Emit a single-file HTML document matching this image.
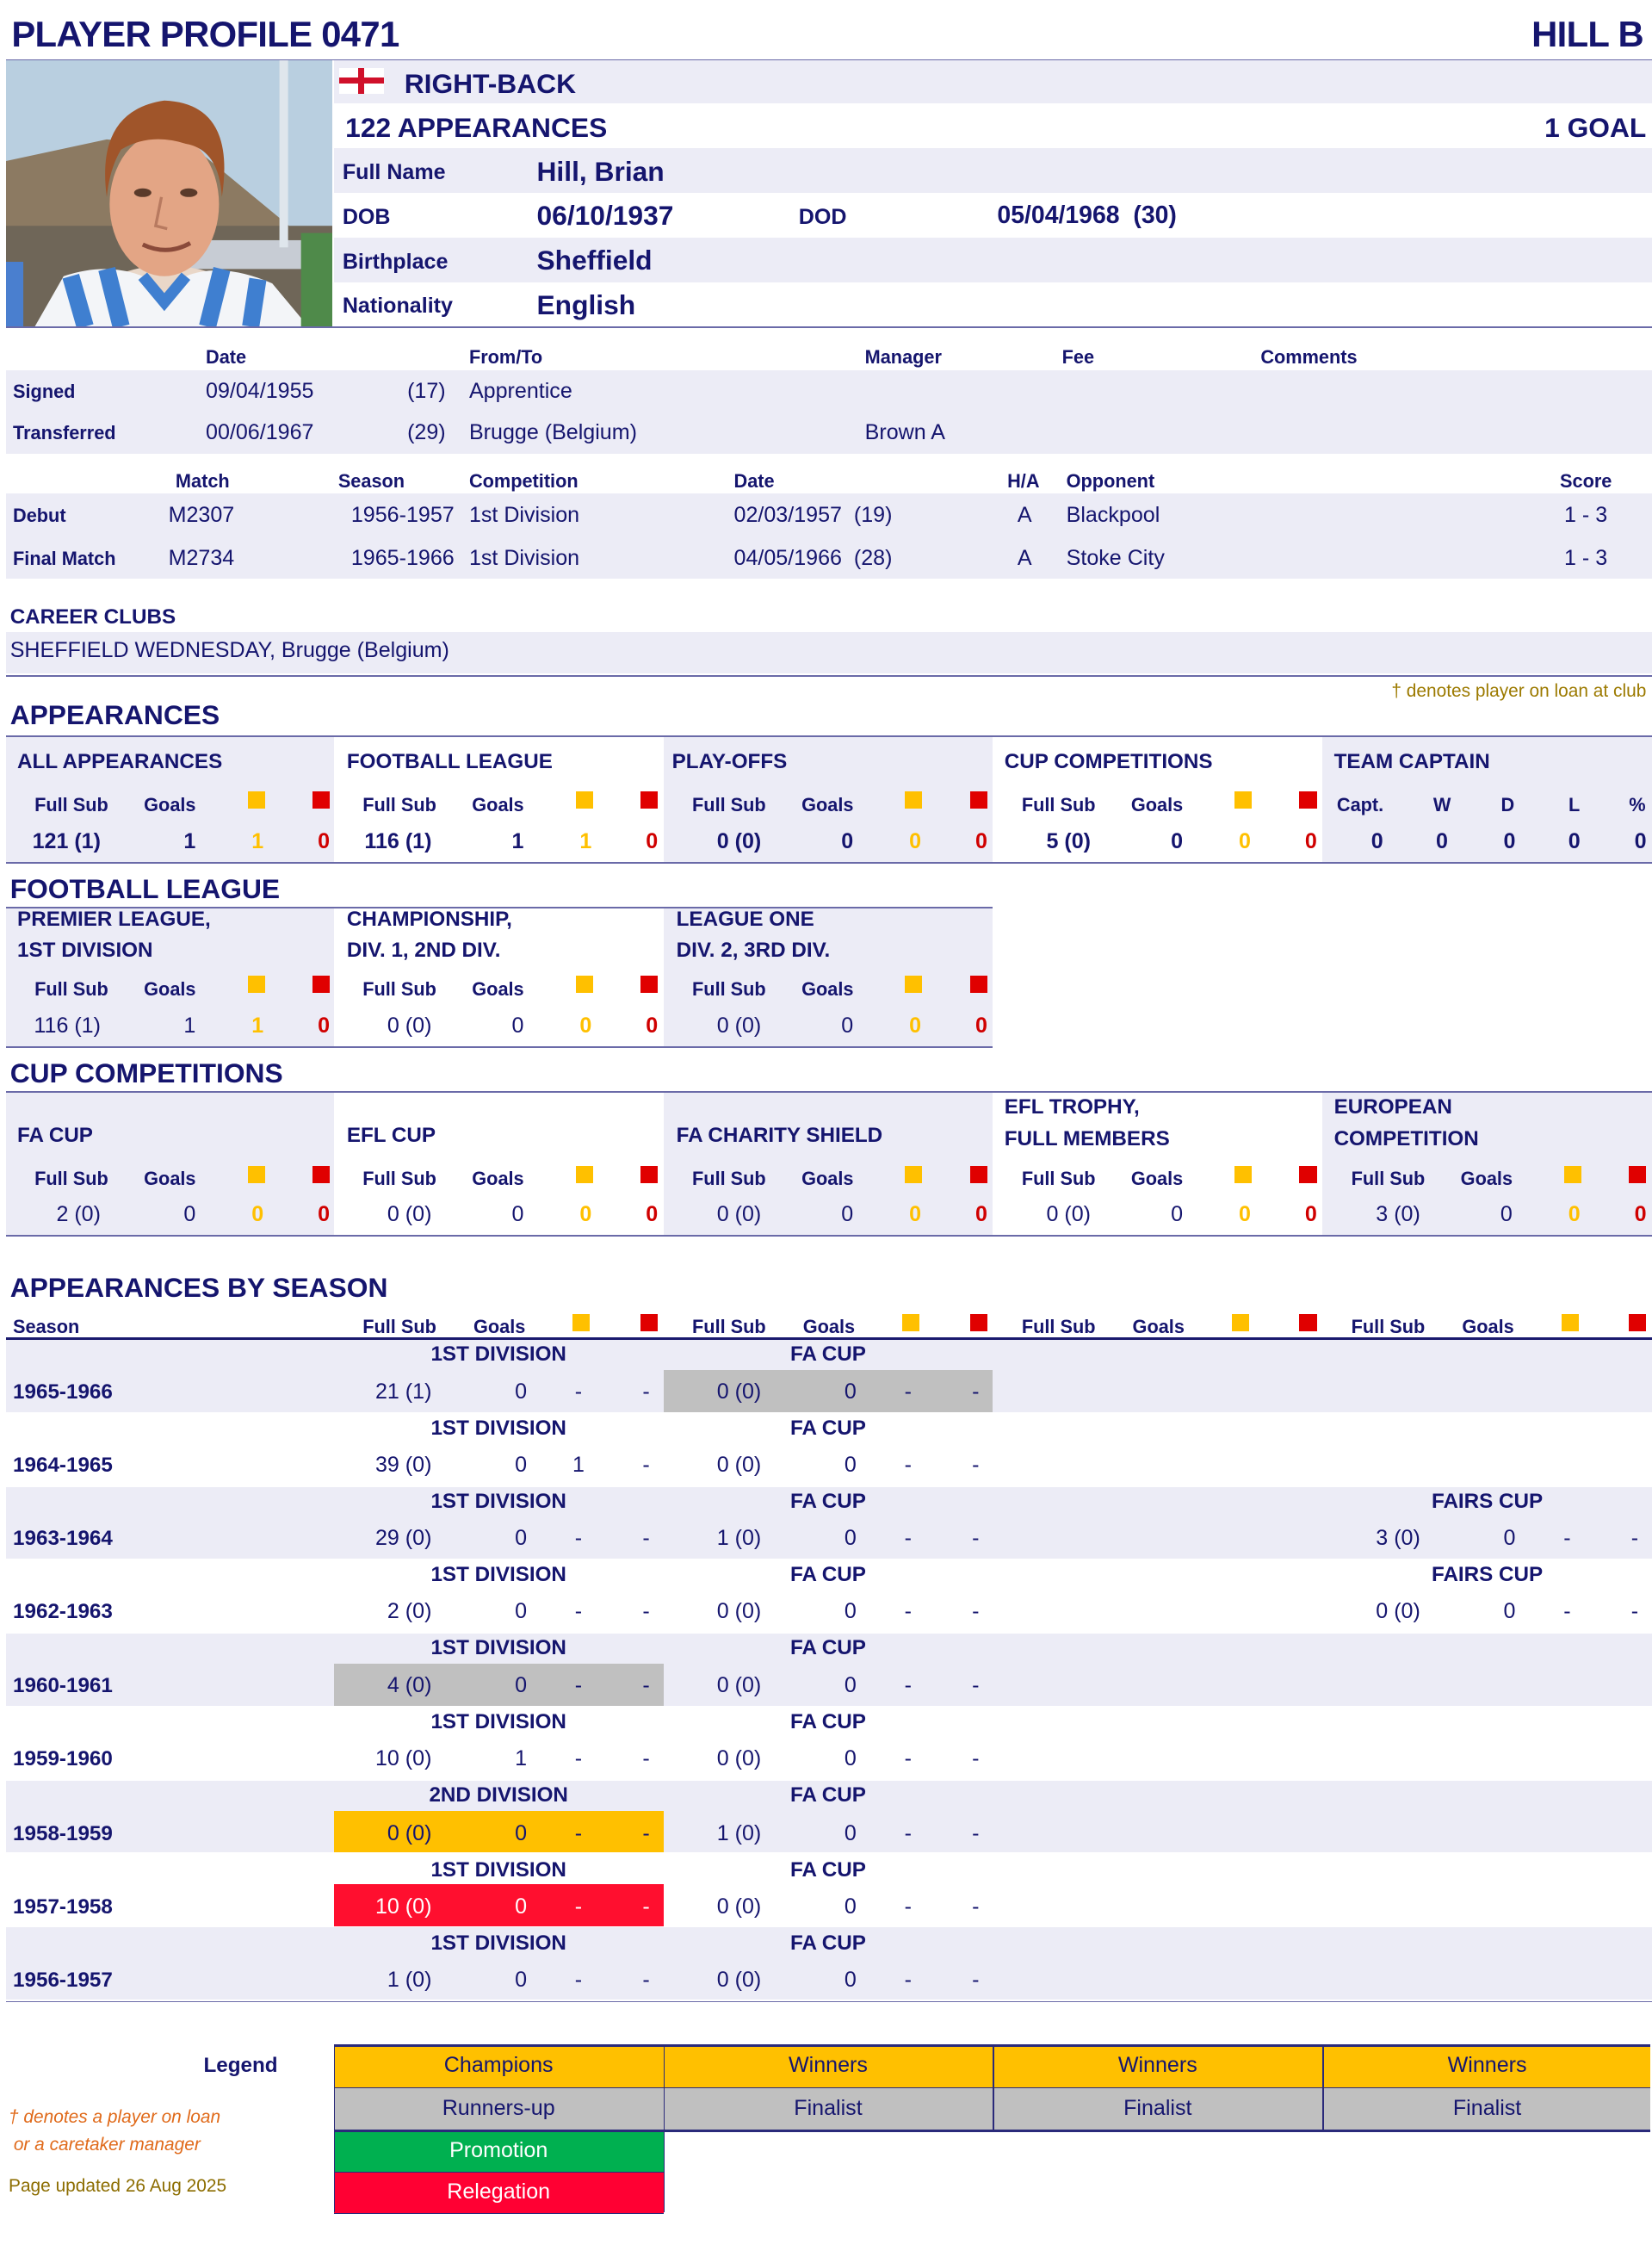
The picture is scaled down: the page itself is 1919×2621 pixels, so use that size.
<!DOCTYPE html>
<html><head><meta charset="utf-8">
<style>
html,body{margin:0;padding:0;background:#fff;}
#w{position:relative;width:1148px;height:1568px;zoom:1.6716;overflow:hidden;font-family:"Liberation Sans",sans-serif;color:#15156e;}
.a{position:absolute;white-space:nowrap;line-height:20px;}
.b{font-weight:bold;}
.bg{position:absolute;background:#ececf6;}
.ln{position:absolute;height:1px;background:#6a6aa8;}
.h{font-weight:bold;font-size:13px;}
.v{font-size:15px;}
.t{font-weight:bold;font-size:14.5px;}
.sq{position:absolute;width:12px;height:12px;}
.y{background:#ffc000;}.r{background:#e00000;}
.cy{color:#ffc000;font-weight:bold;text-align:center;width:20px;}
.cr{color:#d00000;font-weight:bold;text-align:center;width:20px;}
.rt{text-align:right;}
.ct{text-align:center;}
.sec{font-weight:bold;font-size:19px;}
</style></head><body><div id="w">

<div class="a b" style="left:8px;top:9px;font-size:25px;line-height:30px;letter-spacing:-0.4px">PLAYER PROFILE 0471</div>
<div class="a b" style="right:6px;top:9px;font-size:25px;line-height:30px;letter-spacing:-0.4px">HILL B</div>
<div class="ln" style="left:4px;width:1144px;top:41px"></div>

<svg style="position:absolute;left:4px;top:42px" width="227" height="185" viewBox="0 0 227 185">
<rect width="227" height="185" fill="#b9cfe0"/>
<polygon points="0,70 70,55 130,60 227,140 227,185 0,185" fill="#8c7a62"/>
<rect x="0" y="115" width="227" height="70" fill="#6f6658"/>
<rect x="100" y="125" width="127" height="20" fill="#c7ccd4"/>
<rect x="190" y="0" width="6" height="130" fill="#dfe6ec"/>
<path d="M75,150 Q110,135 150,150 L170,185 L55,185 Z" fill="#e9d7c8"/>
<ellipse cx="110" cy="100" rx="38" ry="50" fill="#e3a585"/>
<path d="M70,95 Q62,35 110,28 Q160,30 150,95 Q148,62 125,58 Q100,50 80,62 Q72,75 70,95 Z" fill="#a0552a"/>
<ellipse cx="95" cy="92" rx="6" ry="3" fill="#5a3a2a"/>
<ellipse cx="127" cy="92" rx="6" ry="3" fill="#5a3a2a"/>
<path d="M108,95 L104,115 L112,117" stroke="#b87a60" stroke-width="2" fill="none"/>
<path d="M95,128 Q112,136 128,127" stroke="#8a4a3a" stroke-width="3" fill="none"/>
<path d="M20,185 L40,150 Q70,140 95,150 L110,165 L125,150 Q150,140 185,155 L210,185 Z" fill="#f3f5f8"/>
<path d="M45,150 L55,185 M70,145 L80,185 M150,145 L140,185 M175,152 L170,185" stroke="#3f7fd0" stroke-width="12"/>
<path d="M95,150 L110,168 L125,150" stroke="#3f7fd0" stroke-width="8" fill="none"/>
<rect x="205" y="120" width="22" height="65" fill="#4f8a4a"/>
<rect x="0" y="140" width="12" height="45" fill="#4a7fcf"/>
</svg>

<div class="bg" style="left:232px;width:916px;top:42px;height:30px"></div>
<div class="bg" style="left:232px;width:916px;top:103px;height:31px"></div>
<div class="bg" style="left:232px;width:916px;top:165px;height:31px"></div>
<div style="position:absolute;left:236px;top:47px;width:31px;height:18px;background:#fff"></div>
<div style="position:absolute;left:236px;top:54px;width:31px;height:4px;background:#d0102a"></div>
<div style="position:absolute;left:249px;top:47px;width:4px;height:18px;background:#d0102a"></div>
<div class="a b" style="left:281px;top:47px;font-size:19px;line-height:22px">RIGHT-BACK</div>
<div class="a b" style="left:240px;top:78px;font-size:19px;line-height:22px">122 APPEARANCES</div>
<div class="a b" style="right:4px;top:78px;font-size:19px;line-height:22px">1 GOAL</div>
<div class="a b" style="left:238px;top:110px;font-size:15px">Full Name</div>
<div class="a b" style="left:373px;top:108px;font-size:19px;line-height:22px">Hill, Brian</div>
<div class="a b" style="left:238px;top:141px;font-size:15px">DOB</div>
<div class="a b" style="left:373px;top:139px;font-size:19px;line-height:22px">06/10/1937</div>
<div class="a b" style="left:555px;top:141px;font-size:15px">DOD</div>
<div class="a b" style="left:693px;top:140px;font-size:17px">05/04/1968&nbsp; (30)</div>
<div class="a b" style="left:238px;top:172px;font-size:15px">Birthplace</div>
<div class="a b" style="left:373px;top:170px;font-size:19px;line-height:22px">Sheffield</div>
<div class="a b" style="left:238px;top:203px;font-size:15px">Nationality</div>
<div class="a b" style="left:373px;top:201px;font-size:19px;line-height:22px">English</div>
<div class="ln" style="left:4px;width:1144px;top:227px"></div>

<div class="bg" style="left:4px;width:1144px;top:257px;height:58px"></div>
<div class="a h" style="left:143px;top:238px">Date</div>
<div class="a h" style="left:326px;top:238px">From/To</div>
<div class="a h" style="left:601px;top:238px">Manager</div>
<div class="a h" style="left:738px;top:238px">Fee</div>
<div class="a h" style="left:876px;top:238px">Comments</div>
<div class="a h" style="left:9px;top:262px">Signed</div>
<div class="a v" style="left:143px;top:262px">09/04/1955</div>
<div class="a v" style="left:283px;top:262px">(17)</div>
<div class="a v" style="left:326px;top:262px">Apprentice</div>
<div class="a h" style="left:9px;top:291px">Transferred</div>
<div class="a v" style="left:143px;top:291px">00/06/1967</div>
<div class="a v" style="left:283px;top:291px">(29)</div>
<div class="a v" style="left:326px;top:291px">Brugge (Belgium)</div>
<div class="a v" style="left:601px;top:291px">Brown A</div>

<div class="bg" style="left:4px;width:1144px;top:343px;height:59px"></div>
<div class="a h" style="left:122px;top:324px">Match</div>
<div class="a h" style="left:235px;top:324px">Season</div>
<div class="a h" style="left:326px;top:324px">Competition</div>
<div class="a h" style="left:510px;top:324px">Date</div>
<div class="a h" style="left:700px;top:324px">H/A</div>
<div class="a h" style="left:741px;top:324px">Opponent</div>
<div class="a h" style="left:1084px;top:324px">Score</div>
<div class="a h" style="left:9px;top:348px">Debut</div>
<div class="a v" style="left:117px;top:348px">M2307</div>
<div class="a v" style="left:244px;top:348px">1956-1957</div>
<div class="a v" style="left:326px;top:348px">1st Division</div>
<div class="a v" style="left:510px;top:348px">02/03/1957&nbsp; (19)</div>
<div class="a v" style="left:707px;top:348px">A</div>
<div class="a v" style="left:741px;top:348px">Blackpool</div>
<div class="a v" style="left:1087px;top:348px">1 - 3</div>
<div class="a h" style="left:9px;top:378px">Final Match</div>
<div class="a v" style="left:117px;top:378px">M2734</div>
<div class="a v" style="left:244px;top:378px">1965-1966</div>
<div class="a v" style="left:326px;top:378px">1st Division</div>
<div class="a v" style="left:510px;top:378px">04/05/1966&nbsp; (28)</div>
<div class="a v" style="left:707px;top:378px">A</div>
<div class="a v" style="left:741px;top:378px">Stoke City</div>
<div class="a v" style="left:1087px;top:378px">1 - 3</div>

<div class="a t" style="left:7px;top:419px">CAREER CLUBS</div>
<div class="bg" style="left:4px;width:1144px;top:439px;height:29px"></div>
<div class="a v" style="left:7px;top:442px">SHEFFIELD WEDNESDAY, Brugge (Belgium)</div>
<div class="ln" style="left:4px;width:1144px;top:469px"></div>
<div class="a" style="right:4px;top:470px;font-size:12.5px;color:#9c7a00">† denotes player on loan at club</div>

<div class="a sec" style="left:7px;top:487px">APPEARANCES</div>
<div class="ln" style="left:4px;width:1144px;top:511px"></div>
<div class="bg" style="left:4px;width:228px;top:512px;height:87px"></div>
<div class="bg" style="left:461px;width:229px;top:512px;height:87px"></div>
<div class="bg" style="left:919px;width:229px;top:512px;height:87px"></div>
<div class="ln" style="left:4px;width:1144px;top:599px"></div>
<div class="a t" style="left:12px;top:519px">ALL APPEARANCES</div>
<div class="a t" style="left:241px;top:519px">FOOTBALL LEAGUE</div>
<div class="a t" style="left:467px;top:519px">PLAY-OFFS</div>
<div class="a t" style="left:698px;top:519px">CUP COMPETITIONS</div>
<div class="a t" style="left:927px;top:519px">TEAM CAPTAIN</div>

<div class="a h" style="left:24px;top:549px">Full Sub</div><div class="a h" style="left:100px;top:549px">Goals</div><div class="sq y" style="left:172px;top:550px"></div><div class="sq r" style="left:217px;top:550px"></div>
<div class="a h" style="left:252px;top:549px">Full Sub</div><div class="a h" style="left:328px;top:549px">Goals</div><div class="sq y" style="left:400px;top:550px"></div><div class="sq r" style="left:445px;top:550px"></div>
<div class="a h" style="left:481px;top:549px">Full Sub</div><div class="a h" style="left:557px;top:549px">Goals</div><div class="sq y" style="left:629px;top:550px"></div><div class="sq r" style="left:674px;top:550px"></div>
<div class="a h" style="left:710px;top:549px">Full Sub</div><div class="a h" style="left:786px;top:549px">Goals</div><div class="sq y" style="left:858px;top:550px"></div><div class="sq r" style="left:903px;top:550px"></div>
<div class="a h" style="left:929px;top:549px">Capt.</div><div class="a h" style="left:996px;top:549px">W</div><div class="a h" style="left:1043px;top:549px">D</div><div class="a h" style="left:1090px;top:549px">L</div><div class="a h" style="left:1132px;top:549px">%</div>
<div class="a v b rt" style="left:4px;width:66px;top:575px">121 (1)</div><div class="a v b rt" style="left:104px;width:32px;top:575px">1</div><div class="a v cy" style="left:169px;top:575px">1</div><div class="a v cr" style="left:215px;top:575px">0</div>
<div class="a v b rt" style="left:232px;width:68px;top:575px">116 (1)</div><div class="a v b rt" style="left:332px;width:32px;top:575px">1</div><div class="a v cy" style="left:397px;top:575px">1</div><div class="a v cr" style="left:443px;top:575px">0</div>
<div class="a v b rt" style="left:461px;width:68px;top:575px">0 (0)</div><div class="a v b rt" style="left:561px;width:32px;top:575px">0</div><div class="a v cy" style="left:626px;top:575px">0</div><div class="a v cr" style="left:672px;top:575px">0</div>
<div class="a v b rt" style="left:690px;width:68px;top:575px">5 (0)</div><div class="a v b rt" style="left:790px;width:32px;top:575px">0</div><div class="a v cy" style="left:855px;top:575px">0</div><div class="a v cr" style="left:901px;top:575px">0</div>
<div class="a v b ct" style="left:947px;width:20px;top:575px">0</div><div class="a v b ct" style="left:992px;width:20px;top:575px">0</div><div class="a v b ct" style="left:1039px;width:20px;top:575px">0</div><div class="a v b ct" style="left:1084px;width:20px;top:575px">0</div><div class="a v b ct" style="left:1130px;width:20px;top:575px">0</div>

<div class="a sec" style="left:7px;top:608px">FOOTBALL LEAGUE</div>
<div class="ln" style="left:4px;width:686px;top:630px"></div>
<div class="bg" style="left:4px;width:228px;top:631px;height:96px"></div>
<div class="bg" style="left:461px;width:229px;top:631px;height:96px"></div>
<div class="ln" style="left:4px;width:686px;top:727px"></div>
<div class="a t" style="left:12px;top:629px">PREMIER LEAGUE,</div>
<div class="a t" style="left:12px;top:650px">1ST DIVISION</div>
<div class="a t" style="left:241px;top:629px">CHAMPIONSHIP,</div>
<div class="a t" style="left:241px;top:650px">DIV. 1, 2ND DIV.</div>
<div class="a t" style="left:470px;top:629px">LEAGUE ONE</div>
<div class="a t" style="left:470px;top:650px">DIV. 2, 3RD DIV.</div>
<div class="a h" style="left:24px;top:677px">Full Sub</div><div class="a h" style="left:100px;top:677px">Goals</div><div class="sq y" style="left:172px;top:678px"></div><div class="sq r" style="left:217px;top:678px"></div>
<div class="a h" style="left:252px;top:677px">Full Sub</div><div class="a h" style="left:328px;top:677px">Goals</div><div class="sq y" style="left:400px;top:678px"></div><div class="sq r" style="left:445px;top:678px"></div>
<div class="a h" style="left:481px;top:677px">Full Sub</div><div class="a h" style="left:557px;top:677px">Goals</div><div class="sq y" style="left:629px;top:678px"></div><div class="sq r" style="left:674px;top:678px"></div>
<div class="a v rt" style="left:4px;width:66px;top:703px">116 (1)</div><div class="a v rt" style="left:104px;width:32px;top:703px">1</div><div class="a v cy" style="left:169px;top:703px">1</div><div class="a v cr" style="left:215px;top:703px">0</div>
<div class="a v rt" style="left:232px;width:68px;top:703px">0 (0)</div><div class="a v rt" style="left:332px;width:32px;top:703px">0</div><div class="a v cy" style="left:397px;top:703px">0</div><div class="a v cr" style="left:443px;top:703px">0</div>
<div class="a v rt" style="left:461px;width:68px;top:703px">0 (0)</div><div class="a v rt" style="left:561px;width:32px;top:703px">0</div><div class="a v cy" style="left:626px;top:703px">0</div><div class="a v cr" style="left:672px;top:703px">0</div>

<div class="a sec" style="left:7px;top:736px">CUP COMPETITIONS</div>
<div class="ln" style="left:4px;width:1144px;top:758px"></div>
<div class="bg" style="left:4px;width:228px;top:759px;height:99px"></div>
<div class="bg" style="left:461px;width:229px;top:759px;height:99px"></div>
<div class="bg" style="left:919px;width:229px;top:759px;height:99px"></div>
<div class="ln" style="left:4px;width:1144px;top:858px"></div>
<div class="a t" style="left:12px;top:779px">FA CUP</div>
<div class="a t" style="left:241px;top:779px">EFL CUP</div>
<div class="a t" style="left:470px;top:779px">FA CHARITY SHIELD</div>
<div class="a t" style="left:698px;top:759px">EFL TROPHY,</div>
<div class="a t" style="left:698px;top:781px">FULL MEMBERS</div>
<div class="a t" style="left:927px;top:759px">EUROPEAN</div>
<div class="a t" style="left:927px;top:781px">COMPETITION</div>
<div class="a h" style="left:24px;top:809px">Full Sub</div><div class="a h" style="left:100px;top:809px">Goals</div><div class="sq y" style="left:172px;top:810px"></div><div class="sq r" style="left:217px;top:810px"></div>
<div class="a h" style="left:252px;top:809px">Full Sub</div><div class="a h" style="left:328px;top:809px">Goals</div><div class="sq y" style="left:400px;top:810px"></div><div class="sq r" style="left:445px;top:810px"></div>
<div class="a h" style="left:481px;top:809px">Full Sub</div><div class="a h" style="left:557px;top:809px">Goals</div><div class="sq y" style="left:629px;top:810px"></div><div class="sq r" style="left:674px;top:810px"></div>
<div class="a h" style="left:710px;top:809px">Full Sub</div><div class="a h" style="left:786px;top:809px">Goals</div><div class="sq y" style="left:858px;top:810px"></div><div class="sq r" style="left:903px;top:810px"></div>
<div class="a h" style="left:939px;top:809px">Full Sub</div><div class="a h" style="left:1015px;top:809px">Goals</div><div class="sq y" style="left:1087px;top:810px"></div><div class="sq r" style="left:1132px;top:810px"></div>
<div class="a v rt" style="left:4px;width:66px;top:834px">2 (0)</div><div class="a v rt" style="left:104px;width:32px;top:834px">0</div><div class="a v cy" style="left:169px;top:834px">0</div><div class="a v cr" style="left:215px;top:834px">0</div>
<div class="a v rt" style="left:232px;width:68px;top:834px">0 (0)</div><div class="a v rt" style="left:332px;width:32px;top:834px">0</div><div class="a v cy" style="left:397px;top:834px">0</div><div class="a v cr" style="left:443px;top:834px">0</div>
<div class="a v rt" style="left:461px;width:68px;top:834px">0 (0)</div><div class="a v rt" style="left:561px;width:32px;top:834px">0</div><div class="a v cy" style="left:626px;top:834px">0</div><div class="a v cr" style="left:672px;top:834px">0</div>
<div class="a v rt" style="left:690px;width:68px;top:834px">0 (0)</div><div class="a v rt" style="left:790px;width:32px;top:834px">0</div><div class="a v cy" style="left:855px;top:834px">0</div><div class="a v cr" style="left:901px;top:834px">0</div>
<div class="a v rt" style="left:919px;width:68px;top:834px">3 (0)</div><div class="a v rt" style="left:1019px;width:32px;top:834px">0</div><div class="a v cy" style="left:1084px;top:834px">0</div><div class="a v cr" style="left:1130px;top:834px">0</div>

<div class="a sec" style="left:7px;top:885px">APPEARANCES BY SEASON</div>
<div class="a h" style="left:9px;top:912px">Season</div>
<div class="a h" style="left:252px;top:912px">Full Sub</div><div class="a h" style="left:329px;top:912px">Goals</div><div class="sq y" style="left:398px;top:913px"></div><div class="sq r" style="left:445px;top:913px"></div>
<div class="a h" style="left:481px;top:912px">Full Sub</div><div class="a h" style="left:558px;top:912px">Goals</div><div class="sq y" style="left:627px;top:913px"></div><div class="sq r" style="left:674px;top:913px"></div>
<div class="a h" style="left:710px;top:912px">Full Sub</div><div class="a h" style="left:787px;top:912px">Goals</div><div class="sq y" style="left:856px;top:913px"></div><div class="sq r" style="left:903px;top:913px"></div>
<div class="a h" style="left:939px;top:912px">Full Sub</div><div class="a h" style="left:1016px;top:912px">Goals</div><div class="sq y" style="left:1085px;top:913px"></div><div class="sq r" style="left:1132px;top:913px"></div>
<div style="position:absolute;left:4px;width:1144px;top:929px;height:2px;background:#1a1a6e"></div>

<div class="bg" style="left:4px;width:1144px;top:931px;height:50px"></div>
<div class="bg" style="left:4px;width:1144px;top:1033px;height:50px"></div>
<div class="bg" style="left:4px;width:1144px;top:1135px;height:50px"></div>
<div class="bg" style="left:4px;width:1144px;top:1237px;height:50px"></div>
<div class="bg" style="left:4px;width:1144px;top:1339px;height:50px"></div>
<div style="position:absolute;left:461px;width:229px;top:952px;height:29px;background:#c0c0c0"></div>
<div style="position:absolute;left:232px;width:229px;top:1156px;height:29px;background:#c0c0c0"></div>
<div style="position:absolute;left:232px;width:229px;top:1258px;height:29px;background:#ffc000"></div>
<div style="position:absolute;left:232px;width:229px;top:1309px;height:29px;background:#ff0f2f"></div>
<div class="ln" style="left:4px;width:1144px;top:1390px"></div>

<div class="a t" style="left:9px;top:957px">1965-1966</div>
<div class="a t ct" style="left:232px;width:229px;top:931px">1ST DIVISION</div>
<div class="a v rt" style="left:232px;width:68px;top:957px">21 (1)</div><div class="a v ct" style="left:352px;width:20px;top:957px">0</div><div class="a v ct" style="left:392px;width:20px;top:957px">-</div><div class="a v ct" style="left:439px;width:20px;top:957px">-</div>
<div class="a t ct" style="left:461px;width:229px;top:931px">FA CUP</div>
<div class="a v rt" style="left:461px;width:68px;top:957px">0 (0)</div><div class="a v ct" style="left:581px;width:20px;top:957px">0</div><div class="a v ct" style="left:621px;width:20px;top:957px">-</div><div class="a v ct" style="left:668px;width:20px;top:957px">-</div>

<div class="a t" style="left:9px;top:1008px">1964-1965</div>
<div class="a t ct" style="left:232px;width:229px;top:982px">1ST DIVISION</div>
<div class="a v rt" style="left:232px;width:68px;top:1008px">39 (0)</div><div class="a v ct" style="left:352px;width:20px;top:1008px">0</div><div class="a v ct" style="left:392px;width:20px;top:1008px">1</div><div class="a v ct" style="left:439px;width:20px;top:1008px">-</div>
<div class="a t ct" style="left:461px;width:229px;top:982px">FA CUP</div>
<div class="a v rt" style="left:461px;width:68px;top:1008px">0 (0)</div><div class="a v ct" style="left:581px;width:20px;top:1008px">0</div><div class="a v ct" style="left:621px;width:20px;top:1008px">-</div><div class="a v ct" style="left:668px;width:20px;top:1008px">-</div>

<div class="a t" style="left:9px;top:1059px">1963-1964</div>
<div class="a t ct" style="left:232px;width:229px;top:1033px">1ST DIVISION</div>
<div class="a v rt" style="left:232px;width:68px;top:1059px">29 (0)</div><div class="a v ct" style="left:352px;width:20px;top:1059px">0</div><div class="a v ct" style="left:392px;width:20px;top:1059px">-</div><div class="a v ct" style="left:439px;width:20px;top:1059px">-</div>
<div class="a t ct" style="left:461px;width:229px;top:1033px">FA CUP</div>
<div class="a v rt" style="left:461px;width:68px;top:1059px">1 (0)</div><div class="a v ct" style="left:581px;width:20px;top:1059px">0</div><div class="a v ct" style="left:621px;width:20px;top:1059px">-</div><div class="a v ct" style="left:668px;width:20px;top:1059px">-</div>
<div class="a t ct" style="left:919px;width:229px;top:1033px">FAIRS CUP</div>
<div class="a v rt" style="left:919px;width:68px;top:1059px">3 (0)</div><div class="a v ct" style="left:1039px;width:20px;top:1059px">0</div><div class="a v ct" style="left:1079px;width:20px;top:1059px">-</div><div class="a v ct" style="left:1126px;width:20px;top:1059px">-</div>

<div class="a t" style="left:9px;top:1110px">1962-1963</div>
<div class="a t ct" style="left:232px;width:229px;top:1084px">1ST DIVISION</div>
<div class="a v rt" style="left:232px;width:68px;top:1110px">2 (0)</div><div class="a v ct" style="left:352px;width:20px;top:1110px">0</div><div class="a v ct" style="left:392px;width:20px;top:1110px">-</div><div class="a v ct" style="left:439px;width:20px;top:1110px">-</div>
<div class="a t ct" style="left:461px;width:229px;top:1084px">FA CUP</div>
<div class="a v rt" style="left:461px;width:68px;top:1110px">0 (0)</div><div class="a v ct" style="left:581px;width:20px;top:1110px">0</div><div class="a v ct" style="left:621px;width:20px;top:1110px">-</div><div class="a v ct" style="left:668px;width:20px;top:1110px">-</div>
<div class="a t ct" style="left:919px;width:229px;top:1084px">FAIRS CUP</div>
<div class="a v rt" style="left:919px;width:68px;top:1110px">0 (0)</div><div class="a v ct" style="left:1039px;width:20px;top:1110px">0</div><div class="a v ct" style="left:1079px;width:20px;top:1110px">-</div><div class="a v ct" style="left:1126px;width:20px;top:1110px">-</div>

<div class="a t" style="left:9px;top:1161px">1960-1961</div>
<div class="a t ct" style="left:232px;width:229px;top:1135px">1ST DIVISION</div>
<div class="a v rt" style="left:232px;width:68px;top:1161px">4 (0)</div><div class="a v ct" style="left:352px;width:20px;top:1161px">0</div><div class="a v ct" style="left:392px;width:20px;top:1161px">-</div><div class="a v ct" style="left:439px;width:20px;top:1161px">-</div>
<div class="a t ct" style="left:461px;width:229px;top:1135px">FA CUP</div>
<div class="a v rt" style="left:461px;width:68px;top:1161px">0 (0)</div><div class="a v ct" style="left:581px;width:20px;top:1161px">0</div><div class="a v ct" style="left:621px;width:20px;top:1161px">-</div><div class="a v ct" style="left:668px;width:20px;top:1161px">-</div>

<div class="a t" style="left:9px;top:1212px">1959-1960</div>
<div class="a t ct" style="left:232px;width:229px;top:1186px">1ST DIVISION</div>
<div class="a v rt" style="left:232px;width:68px;top:1212px">10 (0)</div><div class="a v ct" style="left:352px;width:20px;top:1212px">1</div><div class="a v ct" style="left:392px;width:20px;top:1212px">-</div><div class="a v ct" style="left:439px;width:20px;top:1212px">-</div>
<div class="a t ct" style="left:461px;width:229px;top:1186px">FA CUP</div>
<div class="a v rt" style="left:461px;width:68px;top:1212px">0 (0)</div><div class="a v ct" style="left:581px;width:20px;top:1212px">0</div><div class="a v ct" style="left:621px;width:20px;top:1212px">-</div><div class="a v ct" style="left:668px;width:20px;top:1212px">-</div>

<div class="a t" style="left:9px;top:1264px">1958-1959</div>
<div class="a t ct" style="left:232px;width:229px;top:1237px">2ND DIVISION</div>
<div class="a v rt" style="left:232px;width:68px;top:1264px">0 (0)</div><div class="a v ct" style="left:352px;width:20px;top:1264px">0</div><div class="a v ct" style="left:392px;width:20px;top:1264px">-</div><div class="a v ct" style="left:439px;width:20px;top:1264px">-</div>
<div class="a t ct" style="left:461px;width:229px;top:1237px">FA CUP</div>
<div class="a v rt" style="left:461px;width:68px;top:1264px">1 (0)</div><div class="a v ct" style="left:581px;width:20px;top:1264px">0</div><div class="a v ct" style="left:621px;width:20px;top:1264px">-</div><div class="a v ct" style="left:668px;width:20px;top:1264px">-</div>

<div class="a t" style="left:9px;top:1315px">1957-1958</div>
<div class="a t ct" style="left:232px;width:229px;top:1289px">1ST DIVISION</div>
<div class="a v rt" style="left:232px;width:68px;top:1315px;color:#fff">10 (0)</div><div class="a v ct" style="left:352px;width:20px;top:1315px;color:#fff">0</div><div class="a v ct" style="left:392px;width:20px;top:1315px;color:#fff">-</div><div class="a v ct" style="left:439px;width:20px;top:1315px;color:#fff">-</div>
<div class="a t ct" style="left:461px;width:229px;top:1289px">FA CUP</div>
<div class="a v rt" style="left:461px;width:68px;top:1315px">0 (0)</div><div class="a v ct" style="left:581px;width:20px;top:1315px">0</div><div class="a v ct" style="left:621px;width:20px;top:1315px">-</div><div class="a v ct" style="left:668px;width:20px;top:1315px">-</div>

<div class="a t" style="left:9px;top:1366px">1956-1957</div>
<div class="a t ct" style="left:232px;width:229px;top:1340px">1ST DIVISION</div>
<div class="a v rt" style="left:232px;width:68px;top:1366px">1 (0)</div><div class="a v ct" style="left:352px;width:20px;top:1366px">0</div><div class="a v ct" style="left:392px;width:20px;top:1366px">-</div><div class="a v ct" style="left:439px;width:20px;top:1366px">-</div>
<div class="a t ct" style="left:461px;width:229px;top:1340px">FA CUP</div>
<div class="a v rt" style="left:461px;width:68px;top:1366px">0 (0)</div><div class="a v ct" style="left:581px;width:20px;top:1366px">0</div><div class="a v ct" style="left:621px;width:20px;top:1366px">-</div><div class="a v ct" style="left:668px;width:20px;top:1366px">-</div>

<div class="a t rt" style="left:80px;width:113px;top:1425px">Legend</div>
<div style="position:absolute;left:232px;top:1420px;width:915px;height:29px;background:#ffc000;border-top:2px solid #2a2a7a;"></div>
<div style="position:absolute;left:232px;top:1450px;width:915px;height:29px;background:#c0c0c0;border-top:1px solid #2a2a7a;border-bottom:2px solid #2a2a7a"></div>
<div style="position:absolute;left:232px;top:1481px;width:229px;height:28px;background:#00b050;"></div>
<div style="position:absolute;left:232px;top:1509px;width:229px;height:28px;background:#ff0033;border-top:1px solid #2a2a7a;border-bottom:1px solid #2a2a7a"></div>
<div style="position:absolute;left:232px;top:1420px;width:1px;height:117px;background:#2a2a7a"></div>
<div style="position:absolute;left:461px;top:1420px;width:1px;height:117px;background:#2a2a7a"></div>
<div style="position:absolute;left:690px;top:1420px;width:1px;height:60px;background:#2a2a7a"></div>
<div style="position:absolute;left:919px;top:1420px;width:1px;height:60px;background:#2a2a7a"></div>
<div class="a v ct" style="left:232px;width:229px;top:1425px">Champions</div>
<div class="a v ct" style="left:461px;width:229px;top:1425px">Winners</div>
<div class="a v ct" style="left:690px;width:229px;top:1425px">Winners</div>
<div class="a v ct" style="left:919px;width:229px;top:1425px">Winners</div>
<div class="a v ct" style="left:232px;width:229px;top:1455px">Runners-up</div>
<div class="a v ct" style="left:461px;width:229px;top:1455px">Finalist</div>
<div class="a v ct" style="left:690px;width:229px;top:1455px">Finalist</div>
<div class="a v ct" style="left:919px;width:229px;top:1455px">Finalist</div>
<div class="a v ct" style="left:232px;width:229px;top:1484px;color:#fff">Promotion</div>
<div class="a v ct" style="left:232px;width:229px;top:1513px;color:#fff">Relegation</div>
<div class="a" style="left:6px;top:1461px;font-size:12.5px;font-style:italic;color:#e06a1a">† denotes a player on loan</div>
<div class="a" style="left:6px;top:1480px;font-size:12.5px;font-style:italic;color:#e06a1a">&nbsp;or a caretaker manager</div>
<div class="a" style="left:6px;top:1509px;font-size:12.5px;color:#8c6d00">Page updated 26 Aug 2025</div>

</div></body></html>
